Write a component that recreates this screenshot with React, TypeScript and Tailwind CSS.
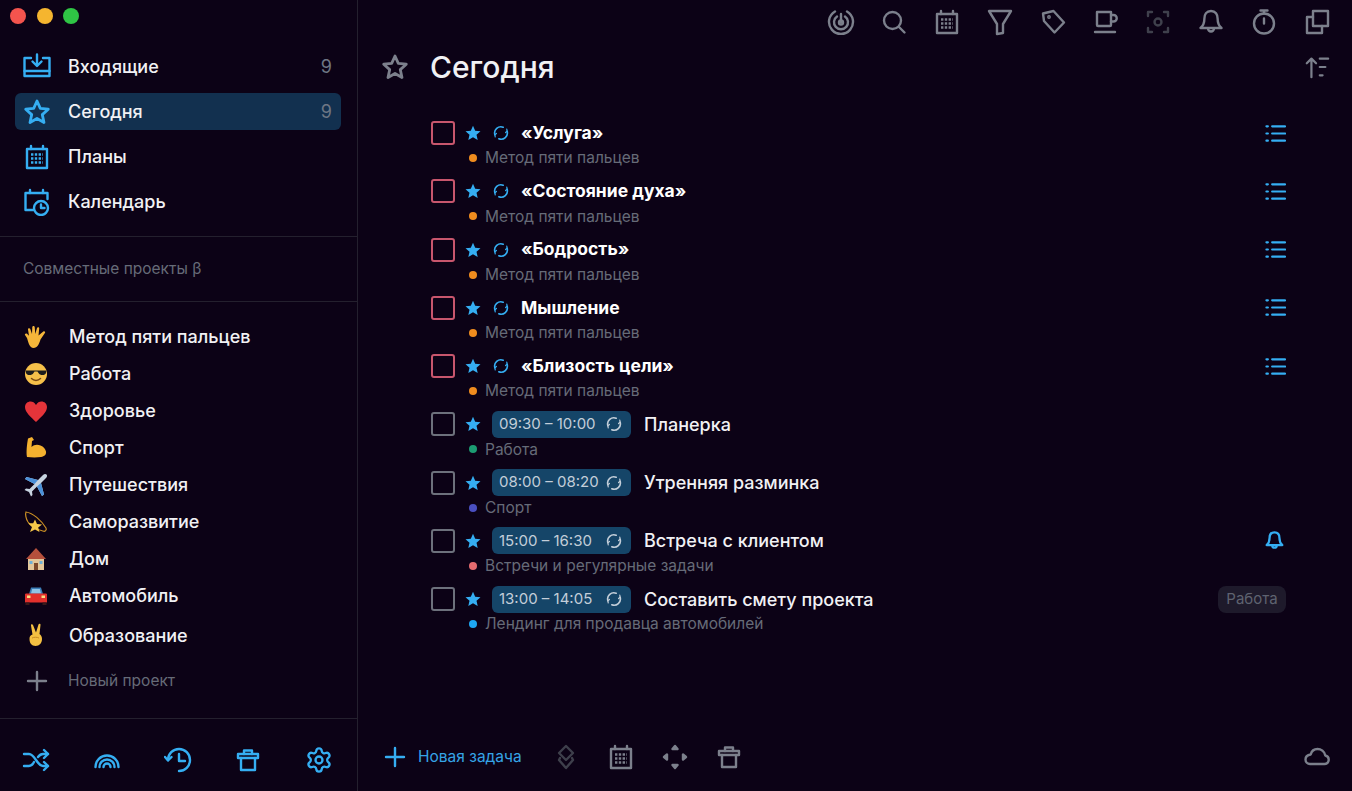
import type { ReactNode } from "react";
import { Settings } from "lucide-react";

const BLUE = "#35aef2";
const GRAY = "#7c808c";

type IconProps = { size?: number; color?: string; width?: number; box?: number; children: ReactNode };

const Ic = ({ size = 28, color = GRAY, width = 2.4, box = 28, children }: IconProps) => (
  <svg
    width={size}
    height={size}
    viewBox={`0 0 ${box} ${box}`}
    fill="none"
    stroke={color}
    strokeWidth={width}
    strokeLinecap="round"
    strokeLinejoin="round"
    className="shrink-0"
  >
    {children}
  </svg>
);

const STAR = "M14 3l3.3 7.4 8 .8-6 5.400 1.700 7.900L14 20.500l-7 4 1.700-7.900-6-5.400 8-.8z";

const CalendarGrid = ({ color }: { color: string }) => (
  <>
    <path d="M4 6h20v19H4z" />
    <path d="M8 3v3M20 3v3" />
    <g stroke={color} strokeWidth="2.600" strokeDasharray="2.400 1.400" strokeLinecap="butt">
      <path d="M8 11.500h12M8 15.500h12M8 19.500h12" />
    </g>
  </>
);

const Trash = () => (
  <>
    <path d="M4 8h20v4H4z" />
    <path d="M10 8V4.500h8V8" />
    <path d="M7 12v12h14V12" />
  </>
);

const Bell = () => (
  <>
    <path d="M14 3c-4.600 0-6.600 3.600-6.600 7.500 0 5-1.200 7.300-3.900 9.500h21c-2.700-2.200-3.900-4.500-3.900-9.500C20.600 6.600 18.600 3 14 3z" />
    <path d="M11 20.500a3 3 0 0 0 6 0" />
  </>
);

const topIcons: ReactNode[] = [
  <Ic key="radar">
    <path d="M8 3.500a12 12 0 1 0 12 0" />
    <path d="M10 8.500a7 7 0 1 0 8 0" />
    <path d="M14 6v8" />
    <circle cx="14" cy="14.500" r="2" />
  </Ic>,
  <Ic key="search">
    <circle cx="12.500" cy="12.500" r="8.500" />
    <path d="M19 19l5.500 5.500" />
  </Ic>,
  <Ic key="cal">
    <CalendarGrid color={GRAY} />
  </Ic>,
  <Ic key="filter">
    <path d="M3 3h22l-8 13v9l-6 1V16z" />
  </Ic>,
  <Ic key="tag">
    <path d="M4 5.500L14.500 3 25 14.500l-9.500 10L5 13z" />
    <circle cx="10" cy="9" r=".7" />
  </Ic>,
  <Ic key="cup">
    <path d="M6 4h14v13a1 1 0 0 1-1 1H7a1 1 0 0 1-1-1z" />
    <path d="M20 7h2.500a3 3 0 0 1 0 6.500H20" />
    <path d="M4 24h20" />
  </Ic>,
  <Ic key="focus" color="#3f404c">
    <path d="M4 8V4h4M20 4h4v4M24 20v4h-4M8 24H4v-4" />
    <circle cx="14" cy="14" r="3.500" />
  </Ic>,
  <Ic key="bell">
    <Bell />
  </Ic>,
  <Ic key="timer">
    <circle cx="14" cy="15.500" r="10" />
    <path d="M10.500 2.500h7M14 2.500v3M14 15.500v-5" />
  </Ic>,
  <Ic key="copy">
    <path d="M10 3h15v15H10z" />
    <path d="M10 9H4v16h15v-7" />
  </Ic>,
];

const Hand = () => (
  <svg width="24" height="24" viewBox="0 0 24 24" className="shrink-0">
    <path fill="#f5b63a" d="M3 13l-2-3c-.6-1.200 1-2.200 2-1.200l2 2L4 4.500c-.2-1.500 1.900-1.900 2.300-.4L8 9l.3-7c.1-1.500 2.300-1.500 2.400 0l.6 7 1.700-6c.4-1.400 2.400-1 2.200.5L14.500 10.500l4.800-4c1.100-.9 2.500.4 1.600 1.500L16.500 14.500C15 19 13.500 23 9.500 23 5.500 23 4.500 17.500 3 13z" />
  </svg>
);

const Cool = () => (
  <svg width="24" height="24" viewBox="0 0 24 24" className="shrink-0">
    <circle cx="12" cy="12" r="11" fill="#f6c04a" />
    <path fill="#1c1c1c" d="M1.500 8.500h21l-.5 2.500c-.5 2.500-6 3-7.500 0l-1-1.500h-3l-1 1.500c-1.500 3-7 2.500-7.500 0z" />
    <path d="M7.500 16.500c2.500 2.500 6.500 2.500 9 0" stroke="#7a4a12" strokeWidth="1.500" fill="none" strokeLinecap="round" />
  </svg>
);

const Heart = () => (
  <svg width="24" height="24" viewBox="0 0 24 24" className="shrink-0">
    <path fill="#e5343a" d="M12 23C7 18 1 13.500 1 8c0-6 8-8 11-2 3-6 11-4 11 2 0 5.500-6 10-11 15z" />
  </svg>
);

const Muscle = () => (
  <svg width="24" height="24" viewBox="0 0 24 24" className="shrink-0">
    <path fill="#f4b12f" d="M4 2.500l4-1.500 2 3-2 1-.5 6c2.500-2.500 6-3 9-1.500 3 1 5 3.500 5.500 6 .5 3-1.500 5-5 5.500-4 .5-9 .5-14 0C2 16 3 8 4 2.500z" />
  </svg>
);

const Plane = () => (
  <svg width="24" height="24" viewBox="0 0 24 24" className="shrink-0">
    <path fill="#c7d3e0" d="M22.500 1.500c1 1 .5 2.500-.5 3.500L17 10l3 11.500-2 1.500-5-9.500-5 5 .5 3.500-1.500 1.500-2-4.500-4.500-2L2 15.500l3.500.5 5-5L1 6l1.500-2L14 7l5-5c1-1 2.500-1.500 3.500-.5z" />
    <path fill="#4a90d9" d="M1 6l1.500-2L14 7l-3.500 4zM20 21.500L18 23l-5-9.500L17 10z" />
  </svg>
);

const Dizzy = () => (
  <svg width="24" height="24" viewBox="0 0 24 24" className="shrink-0">
    <path d="M2 2c7 1 15 8 20 16 1 2-1 4-3 3-4-1-10-2-15-9C2 9 1 4 2 2z" stroke="#c98e24" strokeWidth="1.200" fill="none" />
    <path fill="#f6c84a" d="M11 9.500l2 4.500 5 .5-3.800 3 1.300 4.500-4.500-2.500-5 2.500 2-5-3.800-3.800 5 0z" />
  </svg>
);

const House = () => (
  <svg width="24" height="24" viewBox="0 0 24 24" className="shrink-0">
    <path fill="#e3c79a" d="M4 11h16v12H4z" />
    <path fill="#b5503c" d="M12 1l10 11H2z" />
    <path fill="#7c4a2c" d="M10 16h4v7h-4z" />
    <path fill="#6fb1d8" d="M5.500 14h3v3h-3zM15.500 14h3v3h-3z" />
  </svg>
);

const Car = () => (
  <svg width="24" height="24" viewBox="0 0 24 24" className="shrink-0">
    <path fill="#3c7fb8" d="M5 10l2-6.500h10l2 6.500z" />
    <path fill="#8fc4e6" d="M7 9.500l1.200-4.500h7.600l1.200 4.500z" />
    <path fill="#e2302c" d="M2 9.500h20c1 0 1 1 1 1.500v7.500H1V11c0-.5 0-1.500 1-1.500z" />
    <path fill="#39191a" d="M1.500 18.500h4v2.500h-4zM18.500 18.500h4v2.500h-4z" />
    <path fill="#f8dc80" d="M3 11.500h3.500v2.500H3zM17.500 11.500H21v2.500h-3.500z" />
  </svg>
);

const Peace = () => (
  <svg width="24" height="24" viewBox="0 0 24 24" className="shrink-0">
    <path fill="#f4c042" d="M7 2.500c-.3-1.300 1.500-1.800 2-.5l3 7.500 2.500-8c.5-1.300 2.300-.8 2 .5L15.500 11c1.800 1 2.500 3 2.500 5 0 4-2.500 7-6.500 7S5.500 20 5.500 16c0-2 .5-4 3-4.500z" />
    <path d="M8 15c2-1 5-1 7 0" stroke="#c98c22" strokeWidth="1" fill="none" />
  </svg>
);

const navItems = [
  {
    label: "Входящие",
    count: "9",
    icon: (
      <Ic color={BLUE}>
        <path d="M8 5H1.500v18h25V5H20" />
        <path d="M1.500 18h25" />
        <path d="M14 1.500v11M9.500 8.500l4.500 4.500 4.500-4.500" />
      </Ic>
    ),
  },
  {
    label: "Сегодня",
    count: "9",
    active: true,
    icon: (
      <Ic color={BLUE} width={2.800}>
        <path d={STAR} />
      </Ic>
    ),
  },
  {
    label: "Планы",
    icon: (
      <Ic color={BLUE}>
        <CalendarGrid color={BLUE} />
      </Ic>
    ),
  },
  {
    label: "Календарь",
    icon: (
      <Ic color={BLUE}>
        <path d="M10 22H2.500V5h22v6" />
        <path d="M7 2v3M20 2v3" />
        <circle cx="18" cy="20" r="7" />
        <path d="M18 16.500V20h3.500" />
      </Ic>
    ),
  },
];

const projects = [
  { label: "Метод пяти пальцев", icon: <Hand />, cls: "h-[37px]" },
  { label: "Работа", icon: <Cool />, cls: "h-[37px]" },
  { label: "Здоровье", icon: <Heart />, cls: "h-[37px]" },
  { label: "Спорт", icon: <Muscle />, cls: "h-[37px]" },
  { label: "Путешествия", icon: <Plane />, cls: "h-[37px]" },
  { label: "Саморазвитие", icon: <Dizzy />, cls: "h-[37px]" },
  { label: "Дом", icon: <House />, cls: "h-[37px]" },
  { label: "Автомобиль", icon: <Car />, cls: "h-[37px]" },
  { label: "Образование", icon: <Peace />, cls: "h-[42px]" },
];

const Spin = ({ color, size = 16 }: { color: string; size?: number }) => (
  <svg width={size} height={size} viewBox="0 0 16 16" fill="none" stroke={color} strokeWidth="1.600" strokeLinecap="round" className="shrink-0">
    <g transform="rotate(35 8 8)">
      <path d="M6.500 2A6.300 6.300 0 0 0 4 13" />
      <path d="M9.500 14A6.300 6.300 0 0 0 12 3" />
      <path d="M10.500 1.500l1.500 1.500-.5 2M5.500 14.500L4 13l.5-2" strokeWidth="1.200" />
    </g>
  </svg>
);

const TinyStar = () => (
  <svg width="16" height="16" viewBox="0 0 16 16" className="shrink-0">
    <path fill={BLUE} d="M8 .8l2.200 4.900 5.300.6-4 3.500 1.200 5.300L8 12.300l-4.700 2.800 1.200-5.300-4-3.500 5.300-.6z" />
  </svg>
);

type Task = {
  title: string;
  project: string;
  dot: string;
  time?: string;
  end?: ReactNode;
};

const ListIcon = () => (
  <Ic size={21} box={22} color={BLUE} width={2.300}>
    <path d="M7.500 3.500H21M7.500 11H21M7.500 18.500H21" />
    <path d="M1.500 3.500h1.500M1.500 11h1.500M1.500 18.500h1.500" />
  </Ic>
);

const tasks: Task[] = [
  { title: "«Услуга»", project: "Метод пяти пальцев", dot: "bg-[#f08c1e]", end: <ListIcon /> },
  { title: "«Состояние духа»", project: "Метод пяти пальцев", dot: "bg-[#f08c1e]", end: <ListIcon /> },
  { title: "«Бодрость»", project: "Метод пяти пальцев", dot: "bg-[#f08c1e]", end: <ListIcon /> },
  { title: "Мышление", project: "Метод пяти пальцев", dot: "bg-[#f08c1e]", end: <ListIcon /> },
  { title: "«Близость цели»", project: "Метод пяти пальцев", dot: "bg-[#f08c1e]", end: <ListIcon /> },
  { title: "Планерка", project: "Работа", dot: "bg-[#1c9c72]", time: "09:30 – 10:00" },
  { title: "Утренняя разминка", project: "Спорт", dot: "bg-[#4a4fc0]", time: "08:00 – 08:20" },
  {
    title: "Встреча с клиентом",
    project: "Встречи и регулярные задачи",
    dot: "bg-[#e56b6f]",
    time: "15:00 – 16:30",
    end: (
      <span className="mr-[1px]">
        <Ic size={21} color={BLUE} width={3}>
          <Bell />
        </Ic>
      </span>
    ),
  },
  {
    title: "Составить смету проекта",
    project: "Лендинг для продавца автомобилей",
    dot: "bg-[#1ea7f2]",
    time: "13:00 – 14:05",
    end: (
      <span className="flex h-[27px] w-[68px] items-center justify-center rounded-lg bg-[#1e1a2b] text-[15px] text-[#5f6370]">
        Работа
      </span>
    ),
  },
];

const TaskRow = ({ task }: { task: Task }) => (
  <div className="flex h-[58.25px] shrink-0">
    <div
      className={`mt-[3px] h-6 w-6 shrink-0 rounded-[3px] border-2 ${task.time ? "border-[#6d717c]" : "border-[#c8566d]"}`}
    />
    <div className="ml-[10px] flex min-w-0 flex-1 flex-col">
      <div className="flex h-[30px] items-center">
        <TinyStar />
        {task.time ? (
          <>
            <span className="ml-[11px] flex h-[27px] w-[139px] items-center justify-between rounded-md bg-[#154568] pl-[7px] pr-[9px] text-[15px] text-[#c3ced9]">
              {task.time}
              <Spin color="#c3ced9" />
            </span>
            <span className="ml-[13px] text-[18px] font-medium text-[#f1f1f4]">{task.title}</span>
          </>
        ) : (
          <>
            <span className="ml-[12px]">
              <Spin color={BLUE} />
            </span>
            <span className="ml-[12px] text-[17.500px] font-bold text-white">{task.title}</span>
          </>
        )}
        <span className="ml-auto flex justify-end">{task.end}</span>
      </div>
      <div className="flex h-[20px] items-center pl-[4px] text-[15.500px] text-[#666b78]">
        <span className={`h-2 w-2 rounded-full ${task.dot}`} />
        <span className="ml-[8px]">{task.project}</span>
      </div>
    </div>
  </div>
);

export default function App() {
  return (
    <div className="flex h-[791px] w-[1352px] overflow-hidden bg-[#0c0216] font-['Inter',sans-serif] text-[#f1f1f4]">
      <aside className="flex w-[358px] shrink-0 flex-col border-r border-[#24202e]">
        <div className="flex h-[44px] items-start gap-[10.500px] pl-[10px] pt-2">
          <span className="h-4 w-4 rounded-full bg-[#f4544e]" />
          <span className="h-4 w-4 rounded-full bg-[#f5b52f]" />
          <span className="h-4 w-4 rounded-full bg-[#2fc545]" />
        </div>
        <nav className="flex flex-col pl-[15px] pr-[16px]">
          {navItems.map((item) => (
            <div
              key={item.label}
              className={`my-1 flex h-[37px] items-center rounded-md pl-2 pr-[9px] ${item.active ? "bg-[#12304f]" : ""}`}
            >
              <span className="flex w-[45px]">{item.icon}</span>
              <span className="text-[18px] font-medium">{item.label}</span>
              <span className="ml-auto text-[18px] text-[#6e7684]">{item.count}</span>
            </div>
          ))}
        </nav>
        <div className="mt-3 flex h-[66px] items-center border-y border-[#24202e] pl-[23px] text-[15.500px] text-[#666b78]">
          Совместные проекты β
        </div>
        <div className="flex flex-col pl-6 pt-4">
          {projects.map((p) => (
            <div key={p.label} className={`flex items-center ${p.cls}`}>
              <span className="flex w-[45px]">{p.icon}</span>
              <span className="text-[18px] font-medium">{p.label}</span>
            </div>
          ))}
          <div className="mt-[2px] flex h-[45px] items-center text-[15.500px] text-[#666b78]">
            <span className="flex w-[44px] pl-[1px]">
              <Ic size={24} box={24} color={GRAY}>
                <path d="M12 3v18M3 12h18" />
              </Ic>
            </span>
            Новый проект
          </div>
        </div>
        <div className="mt-auto flex h-[73px] items-center justify-between border-t border-[#24202e] pl-[22px] pr-[24px] pt-[10px]">
          <Ic color={BLUE}>
            <path d="M2 8h5c6 0 8 12 14 12h5M2 20h5c2.500 0 4-2 5-4M16 11c1.200-1.600 2.800-3 5-3h5" />
            <path d="M22 4l4 4-4 4M22 16l4 4-4 4" />
          </Ic>
          <Ic color={BLUE}>
            <path d="M2.500 21a11.500 11.500 0 0 1 23 0M6.500 21a7.500 7.500 0 0 1 15 0M10.500 21a3.500 3.500 0 0 1 7 0" />
          </Ic>
          <Ic color={BLUE}>
            <path d="M4 14a11 11 0 1 1 11 11" />
            <path d="M1 11l3 3.500L7.500 11" />
            <path d="M15 8v7h6" />
          </Ic>
          <Ic color={BLUE}>
            <Trash />
          </Ic>
          <Settings size={28} color={BLUE} strokeWidth={2} className="shrink-0" />
        </div>
      </aside>
      <main className="flex min-w-0 flex-1 flex-col">
        <div className="flex h-[44px] items-center justify-between pl-[469px] pr-[21px]">{topIcons}</div>
        <header className="flex h-[46px] items-center pl-[23px] pr-[22px]">
          <Ic color={GRAY} width={2.800}>
            <path d={STAR} />
          </Ic>
          <h1 className="ml-[21px] text-[30px] font-medium">Сегодня</h1>
          <span className="ml-auto">
            <Ic size={26} color={GRAY}>
              <path d="M8 25V5M3 10l5-5 5 5" />
              <path d="M17 5h9M17 14h6M17 23h3" />
            </Ic>
          </span>
        </header>
        <section className="flex flex-col pl-[73px] pr-[66px] pt-[28px]">
          {tasks.map((t) => (
            <TaskRow key={t.title} task={t} />
          ))}
        </section>
        <footer className="mt-auto flex h-[70px] items-center pl-[26px] pr-[21px] pt-[1px]">
          <Ic size={22} box={22} color={BLUE}>
            <path d="M11 2v18M2 11h18" />
          </Ic>
          <span className="ml-[12px] text-[15.500px] text-[#35a4e6]">Новая задача</span>
          <span className="ml-[30px]">
            <Ic color="#3e3f4b">
              <path d="M14 3l7 7-7 7-7-7z" />
              <path d="M8 15l-1 2 7 8 7-8-1-2" />
            </Ic>
          </span>
          <span className="ml-[27px]">
            <Ic color={GRAY}>
              <CalendarGrid color={GRAY} />
            </Ic>
          </span>
          <span className="ml-[26px]">
            <Ic color={GRAY}>
              <path fill={GRAY} d="M14 3l2.500 3h-5zM14 25l2.500-3h-5zM3 14l3-2.500v5zM25 14l-3-2.500v5z" />
            </Ic>
          </span>
          <span className="ml-[26px]">
            <Ic color={GRAY}>
              <Trash />
            </Ic>
          </span>
          <span className="ml-auto">
            <Ic color={GRAY}>
              <path d="M7 21h14.500a4.300 4.300 0 0 0 .8-8.500C21.500 8.500 18 6 14.500 6c-3.500 0-6 2.500-6.800 5.500C4.500 12 2.500 14 2.500 16.500 2.500 19 4.500 21 7 21z" />
            </Ic>
          </span>
        </footer>
      </main>
    </div>
  );
}
